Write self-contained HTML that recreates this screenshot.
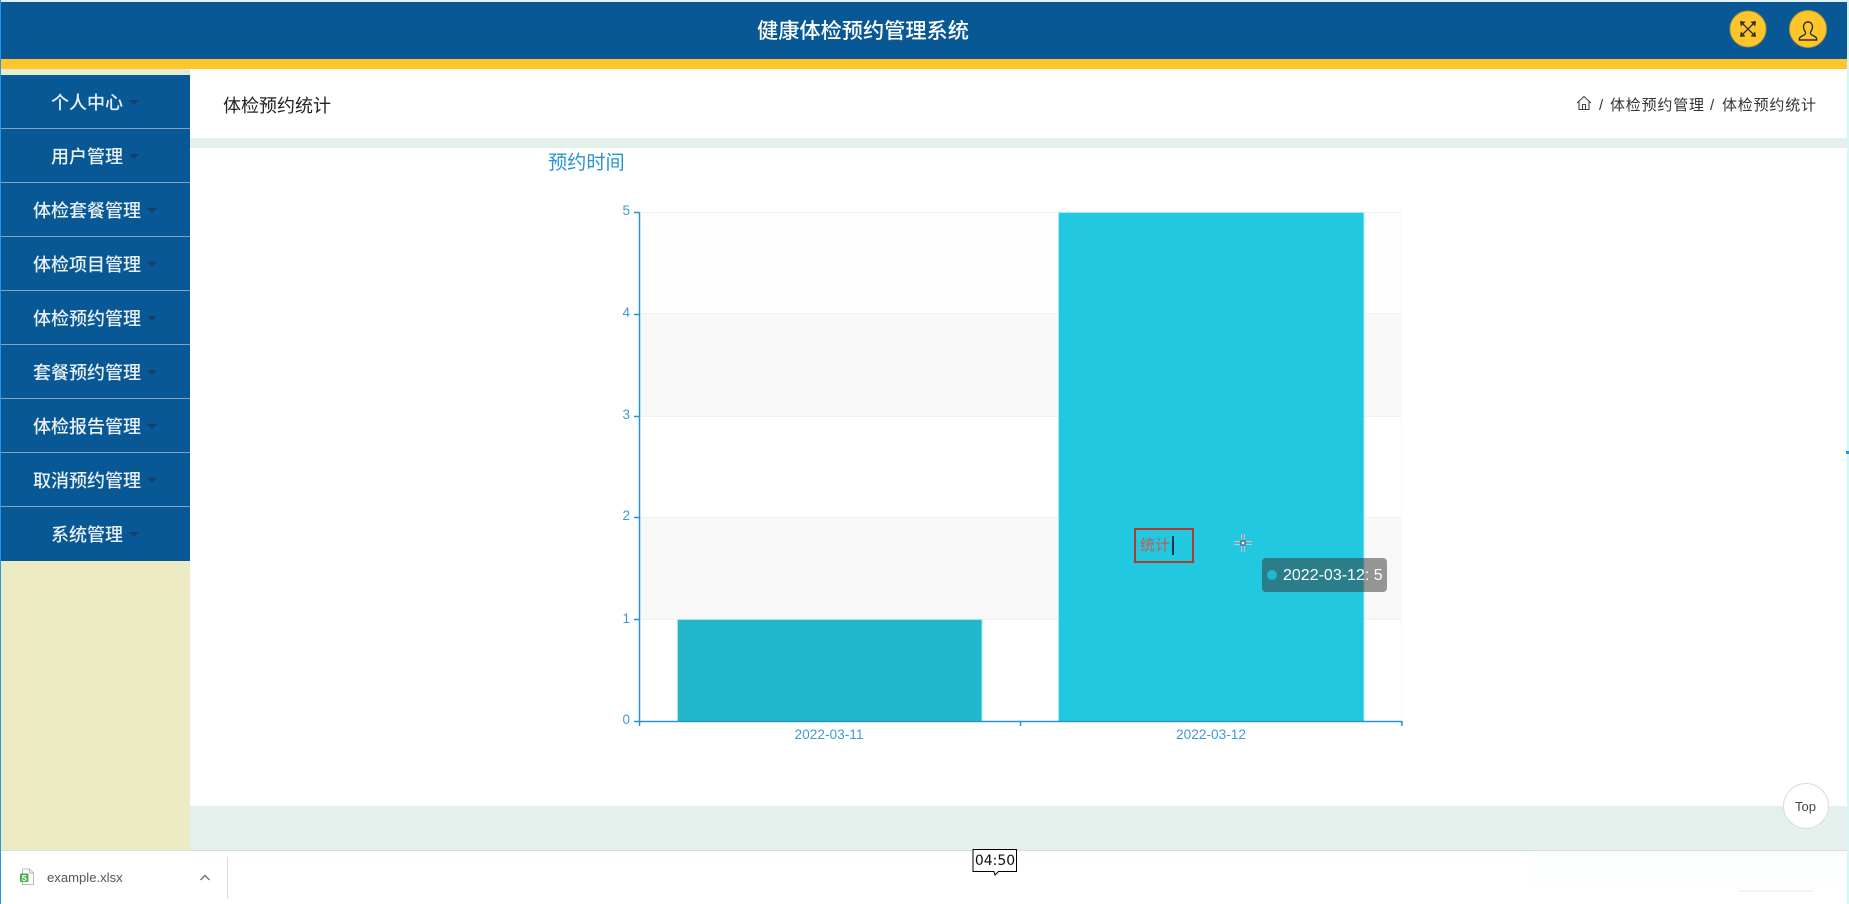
<!DOCTYPE html>
<html lang="zh">
<head>
<meta charset="utf-8">
<title>体检预约统计</title>
<style>
html,body{margin:0;padding:0;width:1849px;height:904px;overflow:hidden;background:#fff}
body{position:relative;font-family:"Liberation Sans","Noto Sans CJK SC",sans-serif}
.a{position:absolute}
.t{position:absolute;white-space:nowrap;line-height:1}
.nav{position:absolute;left:1px;width:189px;height:53px;background:#085895;border-bottom:1px solid #7fa6c6}
.nav span{position:absolute;top:19px;font-size:18px;line-height:18px;color:#eaf1f6;white-space:nowrap;font-weight:500}
.nav i{position:absolute;top:25px;width:0;height:0;border-left:5px solid transparent;border-right:5px solid transparent;border-top:5px solid #144068}
</style>
</head>
<body>
<div class="a" style="left:0;top:0;width:1849px;height:2px;background:#e4f1f5"></div>
<div class="a" style="left:0;top:2px;width:1849px;height:57px;background:#085895"></div>
<div class="a" style="left:0;top:59px;width:1849px;height:10px;background:#ffc62c"></div>
<div class="a" style="left:1px;top:69px;width:189px;height:6px;background:#e6ecd0"></div>

<div class="t" style="left:757px;top:21px;font-size:21.200px;line-height:22px;color:#fff;font-weight:500">健康体检预约管理系统</div>

<svg class="a" style="left:1725px;top:6px" width="106" height="46" viewBox="0 0 106 46" fill="none">
  <circle cx="23" cy="23" r="18" fill="#ffc62c" stroke="#b09a3a" stroke-width="1"/>
  <circle cx="83" cy="23" r="18.500" fill="#ffc62c" stroke="#b09a3a" stroke-width="1"/>
  <path d="M17 17L29 29M29 17L17 29" stroke="#33301f" stroke-width="1.300"/>
  <g fill="#33301f">
    <path d="M15 15L20.500 15.800 15.800 20.500Z"/>
    <path d="M31 15L25.500 15.800 30.200 20.500Z"/>
    <path d="M15 31L20.500 30.200 15.800 25.500Z"/>
    <path d="M31 31L25.500 30.200 30.200 25.500Z"/>
  </g>
  <path d="M83 16c-3 0-4.500 2.300-4.500 5 0 2 1 3.700 2 5v1.500c0 1-1 1.500-3 2.300-2 .8-3.200 1.700-3.200 3.200v1h17.400v-1c0-1.500-1.200-2.400-3.200-3.200-2-.8-3-1.300-3-2.300V26c1-1.300 2-3 2-5 0-2.700-1.500-5-4.500-5z" stroke="#33301f" stroke-width="1.400"/>
</svg>

<div class="nav" style="top:75px"><span style="left:50px">个人中心</span><i style="left:128px"></i></div>
<div class="nav" style="top:129px"><span style="left:50px">用户管理</span><i style="left:128px"></i></div>
<div class="nav" style="top:183px"><span style="left:32px">体检套餐管理</span><i style="left:146px"></i></div>
<div class="nav" style="top:237px"><span style="left:32px">体检项目管理</span><i style="left:146px"></i></div>
<div class="nav" style="top:291px"><span style="left:32px">体检预约管理</span><i style="left:146px"></i></div>
<div class="nav" style="top:345px"><span style="left:32px">套餐预约管理</span><i style="left:146px"></i></div>
<div class="nav" style="top:399px"><span style="left:32px">体检报告管理</span><i style="left:146px"></i></div>
<div class="nav" style="top:453px"><span style="left:32px">取消预约管理</span><i style="left:146px"></i></div>
<div class="nav" style="top:507px;height:54px;border-bottom:0"><span style="left:50px">系统管理</span><i style="left:128px"></i></div>
<div class="a" style="left:1px;top:561px;width:189px;height:289px;background:#edebc3"></div>

<div class="a" style="left:190px;top:138px;width:1659px;height:10px;background:#e4f0ec"></div>
<div class="a" style="left:190px;top:806px;width:1659px;height:44px;background:#e4f0ec"></div>

<div class="t" style="left:223px;top:96px;font-size:18px;line-height:20px;color:#222">体检预约统计</div>

<svg class="a" style="left:1576px;top:95px" width="16" height="16" viewBox="0 0 16 16" fill="none" stroke="#444" stroke-width="1.100">
  <path d="M1 8L8 1.500 15 8"/>
  <path d="M3 6.500V14.500H13V6.500"/>
  <path d="M6.500 14.500V9.500H9.500V14.500"/>
</svg>
<div class="t" style="left:1599px;top:97px;font-size:15px;line-height:17px;color:#333">/</div>
<div class="t" style="left:1610px;top:97px;font-size:15px;letter-spacing:.8px;line-height:17px;color:#333">体检预约管理</div>
<div class="t" style="left:1710px;top:97px;font-size:15px;line-height:17px;color:#333">/</div>
<div class="t" style="left:1722px;top:97px;font-size:15px;letter-spacing:.8px;line-height:17px;color:#333">体检预约统计</div>

<div class="t" style="left:548px;top:153px;font-size:19.200px;line-height:21px;color:#2a93d0">预约时间</div>

<svg class="a" style="left:600px;top:190px" width="830" height="570" viewBox="600 190 830 570">
  <rect x="639" y="212" width="763" height="102" fill="#fefefe"/>
  <rect x="639" y="313" width="763" height="103" fill="#f8f8f8"/>
  <rect x="639" y="517" width="763" height="102" fill="#f8f8f8"/>
  <g stroke="#f1f1f1" stroke-width="1">
    <path d="M639 212.500H1402M639 313.500H1402M639 416.500H1402M639 517.500H1402M639 619.500H1402"/>
    <path d="M1401.500 212V721" stroke="#f8f8f8"/>
  </g>
  <rect x="677.500" y="619.500" width="304.500" height="102" fill="#22b7ca" stroke="#a5e6ee" stroke-width="1"/>
  <rect x="1058.500" y="212.500" width="305.500" height="509" fill="#22c8e0" stroke="#a5eef8" stroke-width="1"/>
  <g stroke="#2a93d0" stroke-width="1.500" fill="none">
    <path d="M639.500 212V726"/>
    <path d="M634 721.500H1402"/>
    <path d="M634 212.500H639M634 314.500H639M634 416.500H639M634 517.500H639M634 619.500H639"/>
    <path d="M1020.500 721V726M1402 721V726"/>
  </g>
  <g font-family="Liberation Sans, sans-serif" font-size="13.500" fill="#3e9bd6" text-anchor="end">
    <text x="630" y="215">5</text>
    <text x="630" y="317">4</text>
    <text x="630" y="419">3</text>
    <text x="630" y="520">2</text>
    <text x="630" y="623">1</text>
    <text x="630" y="724">0</text>
  </g>
  <g font-family="Liberation Sans, sans-serif" font-size="13.700" fill="#3e9bd6" text-anchor="middle">
    <text x="829" y="739">2022-03-11</text>
    <text x="1211" y="739">2022-03-12</text>
  </g>
</svg>

<div class="a" style="left:1134px;top:528px;width:56px;height:31px;border:2px solid #b03a30"></div>
<div class="t" style="left:1140px;top:538px;font-size:15px;line-height:16px;color:#c8584e">统计</div>
<div class="a" style="left:1172px;top:536px;width:1.500px;height:19px;background:#123a4a"></div>

<svg class="a" style="left:1232px;top:532px" width="22" height="22" viewBox="0 0 22 22" fill="none">
  <path d="M11 2V20M2 11H20" stroke="#e8f8fc" stroke-width="3"/>
  <path d="M11 2V20M2 11H20" stroke="#1a4a70" stroke-width="1"/>
  <rect x="9" y="9" width="4" height="4" fill="#e8f8fc" stroke="#1a4a70" stroke-width="1"/>
</svg>

<div class="a" style="left:1262px;top:558px;width:125px;height:34px;border-radius:4px;background:rgba(50,50,50,.5)"></div>
<div class="a" style="left:1267px;top:570px;width:10px;height:10px;border-radius:50%;background:#22b7d0"></div>
<div class="t" style="left:1283px;top:567px;font-size:16px;line-height:17px;color:#fff">2022-03-12: 5</div>

<div class="a" style="left:1783px;top:783px;width:44px;height:44px;border:1px solid #dcdcdc;border-radius:50%;background:#fff"></div>
<div class="t" style="left:1795px;top:799px;font-size:13px;line-height:15px;color:#444">Top</div>

<div class="a" style="left:0;top:850px;width:1849px;height:1px;background:#dcdcdc"></div>
<div class="a" style="left:0;top:851px;width:1849px;height:53px;background:#fff"></div>
<div class="a" style="left:1530px;top:851px;width:319px;height:38px;background:#fdfefe"></div>
<div class="a" style="left:1738px;top:890px;width:76px;height:2px;background:#f3f4f4"></div>

<svg class="a" style="left:19px;top:868px" width="16" height="18" viewBox="0 0 16 18" fill="none">
  <path d="M3.500 1H10.500L14.500 5V16.500H3.500Z" fill="#fff" stroke="#bbb" stroke-width="1"/>
  <path d="M10.500 1V5H14.500" stroke="#bbb" stroke-width="1"/>
  <rect x="1" y="5.500" width="8.500" height="8.500" rx="1" fill="#4caf50"/>
</svg>
<div class="t" style="left:21.500px;top:874px;font-size:8px;line-height:9px;color:#fff;font-weight:bold">S</div>
<div class="t" style="left:47px;top:870px;font-size:13.100px;line-height:16px;color:#555">example.xlsx</div>
<svg class="a" style="left:199px;top:873px" width="12" height="9" viewBox="0 0 12 9" fill="none">
  <path d="M1.500 7L6 2.500 10.500 7" stroke="#777" stroke-width="1.500"/>
</svg>
<div class="a" style="left:227px;top:857px;width:1px;height:42px;background:#dcdcdc"></div>

<svg class="a" style="left:972px;top:848px" width="46" height="28" viewBox="0 0 46 28">
  <path d="M1 1.500H44.500V23.500H26.500L23 27 22 23.500H1Z" fill="#fff" stroke="#000" stroke-width="1"/>
</svg>
<div class="t" style="left:973px;top:853px;width:44px;text-align:center;font-family:'DejaVu Sans',sans-serif;font-size:14px;line-height:17px;color:#111">04:50</div>

<div class="a" style="left:0;top:0;width:1px;height:904px;background:#1a9bea"></div>
<div class="a" style="left:1847px;top:0;width:2px;height:904px;background:#d4f6f6"></div>
<div class="a" style="left:1846px;top:451px;width:3px;height:3px;background:#1a9bea"></div>
</body>
</html>
